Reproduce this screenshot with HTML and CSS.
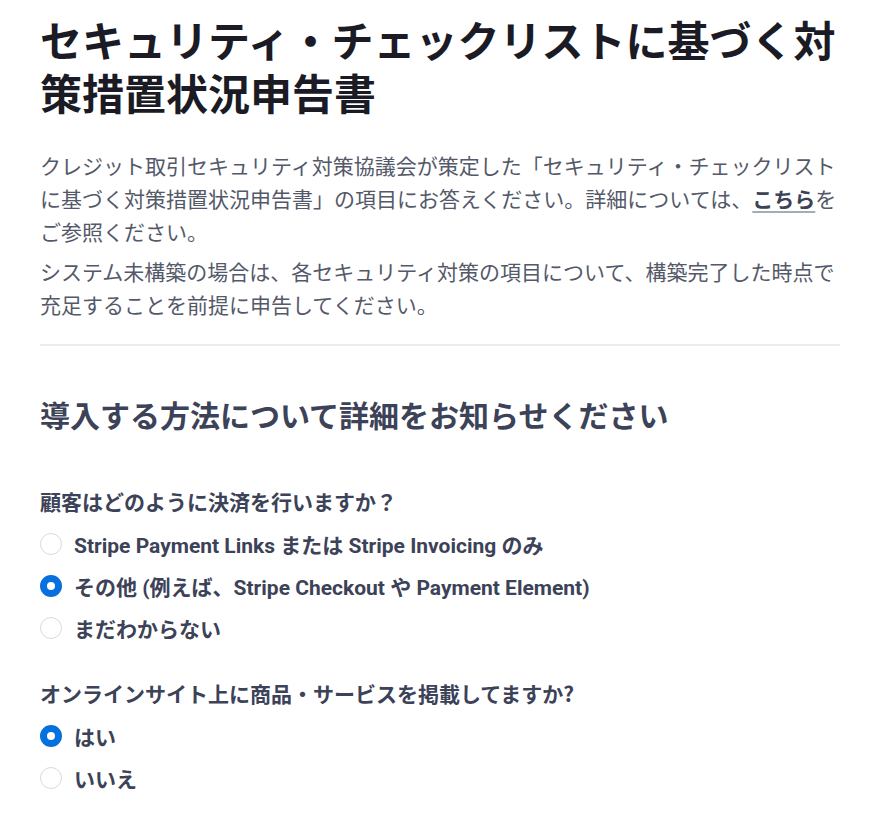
FILE: index.html
```html
<!DOCTYPE html>
<html lang="ja">
<head>
<meta charset="utf-8">
<link rel="stylesheet" href="styles.css">
</head>
<body>
<main class="page">
  <h1 class="title">セキュリティ・チェックリストに基づく対策措置状況申告書</h1>
  <p class="lead">クレジット取引セキュリティ対策協議会が策定した「セキュリティ・チェックリストに基づく対策措置状況申告書」の項目にお答えください。詳細については、<a class="link" href="#">こちら</a>をご参照ください。</p>
  <p class="lead">システム未構築の場合は、各セキュリティ対策の項目について、構築完了した時点で充足することを前提に申告してください。</p>
  <hr class="divider">
  <h2 class="section">導入する方法について詳細をお知らせください</h2>

  <fieldset class="question">
    <legend class="qlabel">顧客はどのように決済を行いますか？</legend>
    <label class="option"><span class="radio"></span><span class="otext">Stripe Payment Links または Stripe Invoicing のみ</span></label>
    <label class="option"><span class="radio checked"></span><span class="otext">その他 (例えば、Stripe Checkout や Payment Element)</span></label>
    <label class="option"><span class="radio"></span><span class="otext">まだわからない</span></label>
  </fieldset>

  <fieldset class="question">
    <legend class="qlabel">オンラインサイト上に商品・サービスを掲載してますか?</legend>
    <label class="option"><span class="radio checked"></span><span class="otext">はい</span></label>
    <label class="option"><span class="radio"></span><span class="otext">いいえ</span></label>
  </fieldset>
</main>
</body>
</html>
```

FILE: styles.css
```css
html, body {
  margin: 0;
  padding: 0;
  background: #ffffff;
}
body {
  font-family: "Noto Sans CJK JP", sans-serif;
  color: #3c4257;
}
.page {
  width: 800px;
  padding: 12px 40px 0 40px;
}
.title {
  margin: 0;
  font-size: 42px;
  line-height: 53px;
  font-weight: 700;
  color: #1a1b25;
}
.lead {
  margin: 0;
  font-size: 21px;
  line-height: 33px;
  color: #545969;
}
.title + .lead {
  margin-top: 31px;
}
.lead + .lead {
  margin-top: 7px;
}
.link {
  color: #3c4257;
  font-weight: 700;
  text-decoration: underline;
  text-decoration-color: #a3acb9;
  text-decoration-thickness: 2px;
  text-underline-offset: 4px;
}
.divider {
  border: 0;
  border-top: 2px solid #ebeef1;
  margin: 23px 0 0 0;
}
.section {
  margin: 48px 0 0 0;
  font-size: 30px;
  line-height: 40px;
  font-weight: 700;
  color: #3c4257;
}
.question {
  border: 0;
  margin: 0;
  padding: 0;
  display: flex;
  flex-direction: column;
}
.section + .question {
  margin-top: 53px;
}
.question + .question {
  margin-top: 30px;
}
.qlabel {
  padding: 0;
  font-size: 21px;
  line-height: 28px;
  font-weight: 700;
  color: #3c4257;
  margin-bottom: 8px;
}
.option {
  display: flex;
  align-items: center;
  gap: 12px;
  height: 42px;
  font-family: "Roboto", "Noto Sans CJK JP", sans-serif;
  font-size: 21px;
  font-weight: 700;
  color: #3c4257;
}
.radio {
  width: 20px;
  height: 20px;
  border: 1.5px solid #d5dbe1;
  border-radius: 50%;
  box-sizing: content-box;
  flex: none;
  background: #fff;
}
.radio.checked {
  width: 8px;
  height: 8px;
  border: 7.5px solid #0570de;
  background: #fff;
}
```
